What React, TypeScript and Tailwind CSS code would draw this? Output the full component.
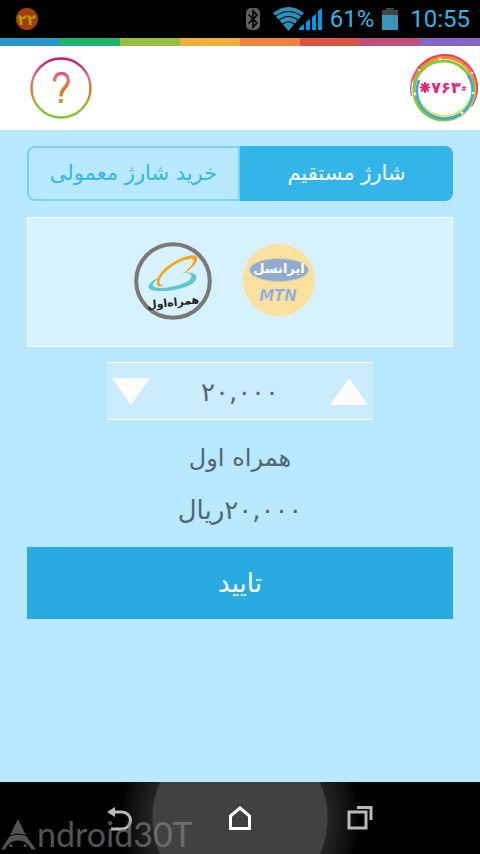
import { useState } from "react";

const AMOUNTS = ["۱۰,۰۰۰", "۲۰,۰۰۰", "۵۰,۰۰۰", "۱۰۰,۰۰۰"];

const STRIPES = [
  "bg-[#2797c8]",
  "bg-[#1fb56c]",
  "bg-[#97bd3f]",
  "bg-[#f0ae3c]",
  "bg-[#ed8343]",
  "bg-[#da5443]",
  "bg-[#bd4f78]",
  "bg-[#8765c3]",
];

function StatusBar() {
  return (
    <div className="flex h-[38px] items-center bg-black pl-4 pr-[10px] font-['Roboto',sans-serif] text-[24px] text-[#33b5e5]">
      <svg width="22" height="22" viewBox="0 0 22 22">
        <circle cx="11" cy="11" r="11" fill="#a83c10" />
        <text x="11" y="17" textAnchor="middle" fontSize="15" fontWeight="700" fill="#aaa000" fontFamily="DejaVu Sans, sans-serif">۲۲</text>
      </svg>
      <div className="ml-auto flex items-center">
        <svg width="16" height="24" viewBox="0 0 16 24" className="mr-3">
          <rect x="1" y="1" width="14" height="22" rx="5" fill="#606060" />
          <path d="M3.500 7.500l8.500 8.500-4 4V4l4 4-8.500 8.500" fill="none" stroke="#000" strokeWidth="1.600" />
        </svg>
        <svg width="50" height="24" viewBox="0 0 50 24" className="mr-[7px]">
          <path d="M0 6Q15.500-6 31 6L15.500 24z" fill="#2b91bb" />
          <path d="M2 9.500Q15.500-.5 29 9.500M5.500 13.500Q15.500 5.500 25.500 13.500M9 17.500Q15.500 12 22 17.500" fill="none" stroke="#000" strokeWidth="1.200" />
          <path d="M26 23v-2l5-4v6zM33 23v-8l4-3v11zM39 23V10l4-3v16zM45 23V4l4-3v22z" fill="#0099e5" />
        </svg>
        <span className="mr-2">61%</span>
        <svg width="16" height="24" viewBox="0 0 16 24" className="mr-3">
          <path d="M0 3h4V1h8v2h4v6H0z" fill="#444" />
          <path d="M0 8h16v15H0z" fill="#3994b8" />
        </svg>
        <span>10:55</span>
      </div>
    </div>
  );
}

function HelpIcon() {
  return (
    <svg width="62" height="62" viewBox="0 0 62 62">
      <defs>
        <linearGradient id="help" gradientUnits="userSpaceOnUse" x1="0" y1="0" x2="0" y2="62">
          <stop offset="0" stopColor="#c3186c" />
          <stop offset="0.150" stopColor="#cc3578" />
          <stop offset="0.350" stopColor="#dc7d7c" />
          <stop offset="0.520" stopColor="#de741b" />
          <stop offset="0.720" stopColor="#bba531" />
          <stop offset="0.850" stopColor="#83c52f" />
          <stop offset="1" stopColor="#83c52f" />
        </linearGradient>
      </defs>
      <circle cx="31" cy="31" r="29.500" fill="none" stroke="url(#help)" strokeWidth="2.400" />
      <path d="M24.500 24.500c0-5 2.500-8 6.800-8s7 2.800 7 7.200c0 6.500-7.300 7.300-7.300 15v.8" fill="none" stroke="url(#help)" strokeWidth="3.400" />
      <rect x="28.800" y="42" width="4" height="4" fill="url(#help)" />
    </svg>
  );
}

function BrandLogo() {
  return (
    <svg width="68" height="68" viewBox="0 0 68 68" fill="none">
      <path d="M2 27A33 33 0 0 1 66 27" stroke="#d02f85" strokeWidth="2.200" />
      <path d="M1.500 42A33 33 0 0 1 12 10" stroke="#ea6b98" strokeWidth="1.500" />
      <path d="M8 15A31.500 31.500 0 0 1 61 52" stroke="#e8435f" strokeWidth="2.400" />
      <circle cx="34.500" cy="34" r="30.500" stroke="#f58a2c" strokeWidth="2.800" />
      <circle cx="33.500" cy="36.500" r="29.500" stroke="#8bc63f" strokeWidth="3" />
      <path d="M65 32A31 31 0 0 1 38 66" stroke="#a5cf4c" strokeWidth="2" />
      <path d="M58 21A28 28 0 1 1 9 26" stroke="#36abe0" strokeWidth="2.600" />
      <path d="M59 46A27 27 0 0 1 12 50" stroke="#dbe447" strokeWidth="1.500" />
      <g fill="#fff">
        <circle cx="30" cy="5" r="1.300" />
        <circle cx="62" cy="19" r="1.200" />
        <circle cx="5" cy="40" r="1.400" />
        <circle cx="63" cy="39" r="1.300" />
        <circle cx="52" cy="59" r="1.400" />
        <circle cx="9" cy="16" r="1.100" />
      </g>
      <path d="M15 29v9M10.500 33.500h9M11.800 30.300l6.400 6.400M18.200 30.300l-6.400 6.400" stroke="#e5237b" strokeWidth="2.200" strokeLinecap="round" />
      <text x="36" y="39" textAnchor="middle" fontSize="16" fontWeight="700" fill="#e5237b" fontFamily="DejaVu Sans, sans-serif">۷۶۳</text>
      <text x="54" y="37" textAnchor="middle" fontSize="7" fontWeight="700" fill="#e5237b" fontFamily="DejaVu Sans, sans-serif">#</text>
    </svg>
  );
}

function HamrahLogo() {
  return (
    <svg width="78" height="78" viewBox="0 0 78 78">
      <circle cx="39" cy="39" r="36.800" fill="none" stroke="#7b7876" strokeWidth="4" />
      <path d="M50 30.500c7-.5 12.500 1 12.500 4.500 0 7-13 12-27 13.500-12 1.200-21 .5-21-3.500 0-4 6-8 13-10-5 3-9.500 6-8.500 8.500 1.500 3 9 3 17 1.500 11-2 21.500-6 21.500-10.500 0-2.500-3-3.500-7.500-4z" fill="#5cc7d0" />
      <path d="M24 44c-4-6 4-17 15-23.500C49 14.500 60 12 62.500 14c3 4-3 13-15 18.500C55 27 61 20 59.500 17.500 57.500 15.500 49 18 41 22.500 31 28.500 23.500 37 26 42c.5 1 2 1.500 4 1-2.500 1.500-5 2-6 1z" fill="#f8a51b" />
      <text x="39" y="64" textAnchor="middle" fontSize="11" fontWeight="700" fill="#222" fontFamily="DejaVu Sans, sans-serif" direction="rtl" transform="rotate(-6 39 60)">همراه‌اول</text>
    </svg>
  );
}

function IrancellLogo() {
  return (
    <svg width="74" height="78" viewBox="0 0 74 78">
      <circle cx="37" cy="38" r="36.500" fill="#fce0a0" stroke="#e3eef0" />
      <ellipse cx="37" cy="28" rx="29.500" ry="11.500" fill="#91abd0" stroke="#cfcfae" />
      <text x="37" y="31" textAnchor="middle" fontSize="13" fontWeight="700" fill="#fff" fontFamily="DejaVu Sans, sans-serif" direction="rtl">ایرانسل</text>
      <text x="36" y="59" textAnchor="middle" fontSize="15" fontWeight="700" fontStyle="italic" fill="#91abd0" stroke="#d6d6d0" strokeWidth="0.500" fontFamily="DejaVu Sans, sans-serif">MTN</text>
    </svg>
  );
}

function NavBar() {
  return (
    <nav className="relative flex h-[72px] justify-center bg-[radial-gradient(circle_at_50%_50%,#414141_0,#414141_87px,#242424_88px,#0c0c0c_112px,#000_120px)]">
      <button aria-label="Back" className="flex w-[120px] items-center justify-center">
        <svg width="26" height="26" viewBox="0 0 26 26">
          <path d="M6 7h9a8.500 8.500 0 0 1 0 17H4" fill="none" stroke="#b9b9b9" strokeWidth="3" />
          <path d="M0 7l8-5v10z" fill="#b9b9b9" />
        </svg>
      </button>
      <button aria-label="Home" className="flex w-[120px] items-center justify-center">
        <svg width="24" height="26" viewBox="0 0 24 26">
          <path d="M2.500 11L12 3l9.500 8v12.500h-19z" fill="none" stroke="#fff" strokeWidth="3" />
        </svg>
      </button>
      <button aria-label="Recent apps" className="flex w-[120px] items-center justify-center">
        <svg width="26" height="26" viewBox="0 0 26 26" fill="none" stroke="#b9b9b9" strokeWidth="3">
          <rect x="2" y="7" width="17" height="16" />
          <path d="M10 2.500h14V15" />
        </svg>
      </button>

      {/* Watermark */}
      <div className="pointer-events-none absolute bottom-0 left-0 flex items-center text-[#8a8a8a] opacity-60">
        <svg width="37" height="36" viewBox="0 0 37 36">
          <path d="M18 3l8 16.500q-8-4-16 0z" fill="currentColor" />
          <path d="M9.500 20.500q8.500-4 17 0L36 33.500h-4.500Q27 24.500 18 24.500T5 33.500H1z" fill="currentColor" />
          <circle cx="11" cy="29.500" r="1.500" fill="currentColor" />
          <circle cx="25" cy="29.500" r="1.500" fill="currentColor" />
        </svg>
        <span className="font-['Lato',sans-serif] text-[34px] leading-[40px]">ndroid30T</span>
      </div>
    </nav>
  );
}

export default function App() {
  const [direct, setDirect] = useState(true);
  const [operator, setOperator] = useState("hamrah");
  const [amount, setAmount] = useState(1);

  const tab = "border-2 border-[#7dd2f3]";
  const activeTab = "bg-[#34b5e8] text-white";

  return (
    <div className="flex min-h-screen flex-col bg-[#b9e9fe] font-['DejaVu_Sans',sans-serif]">
      <StatusBar />

      <div className="flex h-2">
        {STRIPES.map((color) => (
          <div key={color} className={`flex-1 ${color}`} />
        ))}
      </div>

      <header className="flex h-[84px] items-center justify-between bg-white pl-[30px] pr-[2px]">
        <button aria-label="Help">
          <HelpIcon />
        </button>
        <BrandLogo />
      </header>

      <main className="flex flex-1 flex-col px-[27px] pt-4">
        {/* Charge type */}
        <div dir="rtl" className="grid h-[55px] grid-cols-2 text-[21px] text-[#34b5e8]">
          <button onClick={() => setDirect(true)} className={`rounded-r-lg ${direct ? activeTab : tab}`}>
            شارژ مستقیم
          </button>
          <button onClick={() => setDirect(false)} className={`rounded-l-lg ${direct ? tab : activeTab}`}>
            خرید شارژ معمولی
          </button>
        </div>

        {/* Operators */}
        <div className="mt-4 flex h-[130px] items-center justify-center gap-[30px] border border-white bg-[#d6f1ff] pb-0.5 pr-[30px]">
          <button aria-label="همراه اول" aria-pressed={operator === "hamrah"} onClick={() => setOperator("hamrah")}>
            <HamrahLogo />
          </button>
          <button aria-label="ایرانسل" aria-pressed={operator === "irancell"} onClick={() => setOperator("irancell")}>
            <IrancellLogo />
          </button>
        </div>

        {/* Amount */}
        <div className="mx-20 mt-[15px] flex h-[58px] items-center justify-between border-y border-white bg-[#caecfc] px-[5px]">
          <button aria-label="کمتر" onClick={() => setAmount(Math.max(0, amount - 1))}>
            <svg width="38" height="27" viewBox="0 0 38 27">
              <path d="M0 0h38L19 27z" fill="#fcfcfc" />
            </svg>
          </button>
          <span className="pt-0.5 text-[26px] text-[#526670]">{AMOUNTS[amount]}</span>
          <button aria-label="بیشتر" onClick={() => setAmount(Math.min(AMOUNTS.length - 1, amount + 1))}>
            <svg width="38" height="27" viewBox="0 0 38 27">
              <path d="M0 27h38L19 0z" fill="#fcfcfc" />
            </svg>
          </button>
        </div>

        <div dir="rtl" className="mt-3 text-center leading-[52px] text-[#526670]">
          <p className="text-[24px]">{operator === "hamrah" ? "همراه اول" : "ایرانسل"}</p>
          <p className="text-[26px]">{AMOUNTS[amount]}ریال</p>
        </div>

        <button className="mt-[11px] h-[72px] bg-[#29abe2] text-[26px] text-white">تایید</button>
      </main>

      <NavBar />
    </div>
  );
}
